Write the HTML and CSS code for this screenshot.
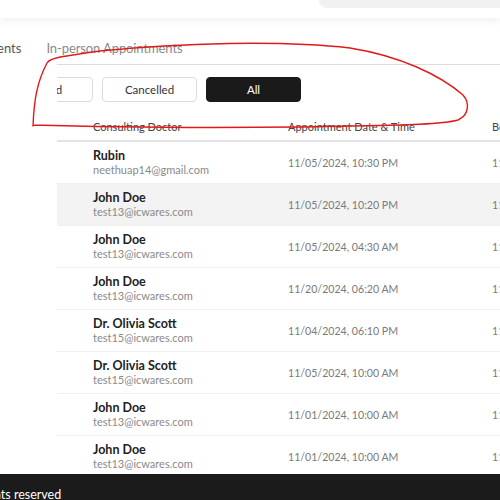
FILE: index.html
```html
<!DOCTYPE html>
<html>
<head>
<meta charset="utf-8">
<link rel="stylesheet" href="styles.css">
</head>
<body>
<div class="page">
  <header class="topbar">
    <div class="search"></div>
  </header>
  <main class="main">
    <nav class="tabs">
      <span class="tab tab-first">Online Appointments</span>
      <span class="tab tab-second">In-person Appointments</span>
    </nav>
    <section class="panel">
      <div class="scroller">
        <div class="tabline"></div>
        <div class="filters">
          <button class="btn btn-wide">Completed</button>
          <button class="btn">Cancelled</button>
          <button class="btn btn-active">All</button>
        </div>
        <div class="table">
          <div class="row head">
            <div class="cell"></div>
            <div class="cell">Consulting Doctor</div>
            <div class="cell">Appointment Date &amp; Time</div>
            <div class="cell">Booked On</div>
          </div>
          <div class="row">
            <div class="cell"></div>
            <div class="cell"><div class="name">Rubin</div><div class="email">neethuap14@gmail.com</div></div>
            <div class="cell date">11/05/2024, 10:30 PM</div>
            <div class="cell date">11/05/2024, 10:25 PM</div>
          </div>
          <div class="row alt">
            <div class="cell"></div>
            <div class="cell"><div class="name">John Doe</div><div class="email">test13@icwares.com</div></div>
            <div class="cell date">11/05/2024, 10:20 PM</div>
            <div class="cell date">11/05/2024, 10:15 PM</div>
          </div>
          <div class="row">
            <div class="cell"></div>
            <div class="cell"><div class="name">John Doe</div><div class="email">test13@icwares.com</div></div>
            <div class="cell date">11/05/2024, 04:30 AM</div>
            <div class="cell date">11/05/2024, 04:20 AM</div>
          </div>
          <div class="row">
            <div class="cell"></div>
            <div class="cell"><div class="name">John Doe</div><div class="email">test13@icwares.com</div></div>
            <div class="cell date">11/20/2024, 06:20 AM</div>
            <div class="cell date">11/05/2024, 06:10 AM</div>
          </div>
          <div class="row">
            <div class="cell"></div>
            <div class="cell"><div class="name">Dr. Olivia Scott</div><div class="email">test15@icwares.com</div></div>
            <div class="cell date">11/04/2024, 06:10 PM</div>
            <div class="cell date">11/04/2024, 06:00 PM</div>
          </div>
          <div class="row">
            <div class="cell"></div>
            <div class="cell"><div class="name">Dr. Olivia Scott</div><div class="email">test15@icwares.com</div></div>
            <div class="cell date">11/05/2024, 10:00 AM</div>
            <div class="cell date">11/04/2024, 09:50 AM</div>
          </div>
          <div class="row">
            <div class="cell"></div>
            <div class="cell"><div class="name">John Doe</div><div class="email">test13@icwares.com</div></div>
            <div class="cell date">11/01/2024, 10:00 AM</div>
            <div class="cell date">11/01/2024, 09:30 AM</div>
          </div>
          <div class="row">
            <div class="cell"></div>
            <div class="cell"><div class="name">John Doe</div><div class="email">test13@icwares.com</div></div>
            <div class="cell date">11/01/2024, 10:00 AM</div>
            <div class="cell date">11/01/2024, 09:30 AM</div>
          </div>
        </div>
      </div>
    </section>
  </main>
  <footer class="footer">
    <span class="footer-text">© 2024 Medical Portal. All rights reserved</span>
  </footer>
  <svg class="scribble" width="500" height="500" viewBox="0 0 500 500">
    <path d="M33,126 C34,100 37,82 47,63 C50,58 58,57 100,51 C180,43 280,40 350,48 C400,56 440,75 463,95 C470,103 469,115 458,120 C440,125 400,125 300,127 C200,128 100,127 33,125" fill="none" stroke="#e01a1a" stroke-width="1.4" stroke-linecap="round"/>
  </svg>
</div>
</body>
</html>
```

FILE: styles.css
```css
* { box-sizing: border-box; }
html, body { margin: 0; padding: 0; }
body {
  font-family: Lato, "Open Sans", sans-serif;
  background: #fff;
  color: #222;
}
.page {
  position: relative;
  width: 500px;
  height: 500px;
  overflow: hidden;
  display: flex;
  flex-direction: column;
}
.topbar {
  height: 18px;
  flex: none;
  display: flex;
  justify-content: flex-end;
  box-shadow: 0 3px 7px rgba(0,0,0,0.06);
  position: relative;
  z-index: 1;
  background: #fff;
}
.search {
  width: 181px;
  height: 8px;
  background: #f1f1f1;
  border-bottom-left-radius: 8px;
}
.main {
  flex: 1;
  min-height: 0;
  overflow: hidden;
  display: flex;
  flex-direction: column;
}
.tabs {
  display: flex;
  gap: 25px;
  margin-top: 21px;
  margin-left: -100px;
  height: 18px;
  align-items: center;
  font-size: 13px;
  white-space: nowrap;
}
.tab-first { color: #555; }
.tab-second { color: #8a8a8a; letter-spacing: -0.1px; }
.panel {
  margin-left: 57px;
  overflow: hidden;
  flex: 1;
}
.scroller {
  width: 700px;
}
.tabline {
  height: 1px;
  background: #dedede;
  margin-top: 7px;
}
.filters {
  display: flex;
  gap: 9px;
  margin-top: 12px;
  margin-left: -81px;
}
.btn {
  font-family: inherit;
  font-size: 11.5px;
  height: 25px;
  min-width: 95px;
  border: 1px solid #dcdcdc;
  border-radius: 4px;
  background: #fff;
  color: #333;
  padding: 0 20px;
}
.btn-wide { width: 117px; }
.btn-active {
  background: #1a1a1a;
  border-color: #1a1a1a;
  color: #fff;
}
.table {
  margin-top: 10px;
}
.row {
  display: grid;
  grid-template-columns: 36px 195px 204px 200px;
  height: 42px;
  border-bottom: 1px solid #efefef;
  align-items: center;
}
.row.head {
  height: 30px;
  border-bottom: 2px solid #e4e4e4;
  font-size: 11px;
  color: #444;
}
.row.alt { background: #f3f3f3; }
.cell { white-space: nowrap; }
.name {
  font-size: 12.5px;
  font-weight: 700;
  color: #222;
  line-height: 14px;
}
.email {
  font-size: 11px;
  color: #8a8a8a;
  line-height: 14px;
}
.date {
  font-size: 10.6px;
  color: #7a7a7a;
}
.footer {
  position: relative;
  z-index: 2;
  flex: none;
  height: 26px;
  margin-top: -26px;
  background: #1b1b1b;
  color: #fff;
  font-size: 12.5px;
  padding-top: 13px;
  white-space: nowrap;
  overflow: hidden;
}
.footer-text {
  display: inline-block;
  margin-left: -168px;
}
.scribble {
  position: absolute;
  left: 0;
  top: 0;
  pointer-events: none;
  z-index: 3;
}
```
